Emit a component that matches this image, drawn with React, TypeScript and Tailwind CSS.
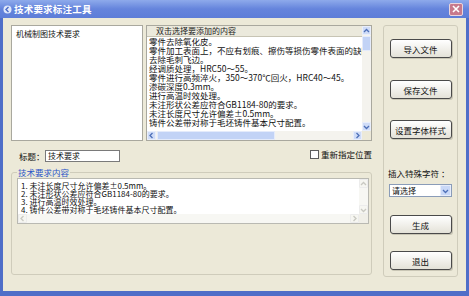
import React from "react";

const topLines = [
  "零件去除氧化皮。",
  "零件加工表面上，不应有划痕、擦伤等损伤零件表面的缺陷",
  "去除毛刺飞边。",
  "经调质处理，HRC50～55。",
  "零件进行高频淬火，350～370℃回火，HRC40～45。",
  "渗碳深度0.3mm。",
  "进行高温时效处理。",
  "未注形状公差应符合GB1184-80的要求。",
  "未注长度尺寸允许偏差±0.5mm。",
  "铸件公差带对称于毛坯铸件基本尺寸配置。",
];

const bottomLines = [
  "1. 未注长度尺寸允许偏差±0.5mm。",
  "2. 未注形状公差应符合GB1184-80的要求。",
  "3. 进行高温时效处理。",
  "4. 铸件公差带对称于毛坯铸件基本尺寸配置。",
];

function Chevron({ dir, color }: { dir: "up" | "down" | "left" | "right"; color: string }) {
  const pts: Record<string, string> = {
    up: "1,4 3.5,1.5 6,4",
    down: "1,2 3.5,4.5 6,2",
    left: "4.5,1 2,3.5 4.5,6",
    right: "2.5,1 5,3.5 2.5,6",
  };
  const vert = dir === "up" || dir === "down";
  return (
    <svg width={7} height={vert ? 6 : 7} viewBox={vert ? "0 0 7 6" : "0 0 7 7"}>
      <polyline points={pts[dir]} fill="none" stroke={color} strokeWidth="1.3" />
    </svg>
  );
}

function ArrowBtn({ dir, active }: { dir: "up" | "down" | "left" | "right"; active: boolean }) {
  return (
    <div
      className={
        active
          ? "w-[9px] h-[9px] shrink-0 flex items-center justify-center rounded-[1px] bg-[#cfdcf7] border border-[#e8eefc]"
          : "w-[9px] h-[9px] shrink-0 flex items-center justify-center rounded-[1px] bg-[#f6f6f1] border border-[#ececec]"
      }
    >
      <Chevron dir={dir} color={active ? "#4d6fb8" : "#c9c9c2"} />
    </div>
  );
}

function Button({ label }: { label: string }) {
  return (
    <div className="w-[62px] h-[19px] shrink-0 rounded-[3px] border border-[#4a4a4a] bg-linear-to-b from-[#ffffff] to-[#e4e2d8] shadow-[1px_1px_0_#c9c6b5] flex items-center justify-center text-[8.5px] leading-[10px] text-[#111]">
      {label}
    </div>
  );
}

export default function App() {
  return (
    <div className="w-[469px] h-[296px] overflow-hidden bg-[#4f6ec8] flex flex-col font-['Noto_Sans_CJK_SC','Noto_Sans',sans-serif]">
      {/* Title bar */}
      <div className="h-[18px] shrink-0 bg-linear-to-b from-[#8eaaeb] via-[#6584dc] to-[#5d7dd8] flex items-center pl-[3px] pr-[6px]">
        <svg width="9" height="9" viewBox="0 0 9 9" className="shrink-0">
          <circle cx="4.5" cy="4.5" r="4" fill="#dfe7fa" />
          <polyline points="5.5,2 3,4.5 5.5,7" fill="none" stroke="#4a6ac8" strokeWidth="1.4" />
        </svg>
        <span className="ml-[2px] text-[9.5px] leading-[12px] font-bold text-white tracking-[0.2px]">技术要求标注工具</span>
        <div className="ml-auto w-[14px] h-[13px] rounded-[2px] bg-[#c7798c] border border-[#ead5dc] flex items-center justify-center">
          <svg width="8" height="8" viewBox="0 0 8 8">
            <path d="M1 1 L7 7 M7 1 L1 7" stroke="#fff" strokeWidth="1.6" />
          </svg>
        </div>
      </div>

      {/* Body */}
      <div className="flex-1 mx-[3px] mb-[5px] bg-[#ece9d8] flex pt-[7px] pl-[8px]">
        {/* Left column */}
        <div className="w-[361px] shrink-0 flex flex-col">
          {/* top row */}
          <div className="h-[116px] flex gap-[3px]">
            <div className="w-[133px] h-full bg-white border border-[#a9a89e] pl-[4px] pt-[3px] text-[8px] leading-[10px] text-[#111]">
              机械制图技术要求
            </div>
            <div className="w-[226px] h-full bg-white border border-[#a9a89e] flex flex-col">
              <div className="flex flex-1 min-h-0">
                <div className="flex-1 min-w-0 overflow-hidden">
                  <div className="h-[11px] bg-[#ebe9dc] border-b border-[#c7c4b4] pl-[9px] text-[8px] leading-[10px] text-[#222] whitespace-nowrap">
                    双击选择要添加的内容
                  </div>
                  <div className="pl-[2px]">
                    {topLines.map((l) => (
                      <div key={l} className="h-[9px] text-[8.5px] leading-[9px] text-[#111] whitespace-nowrap">
                        {l}
                      </div>
                    ))}
                  </div>
                </div>
                <div className="w-[9px] shrink-0 bg-[#f4f3ee] flex flex-col">
                  <ArrowBtn dir="up" active />
                  <div className="h-[15px] mt-[1px] rounded-[1px] bg-[#c2d3f6] border border-[#e4ebfb]" />
                  <div className="flex-1" />
                  <ArrowBtn dir="down" active />
                </div>
              </div>
              <div className="h-[9px] flex shrink-0">
                <div className="flex-1 flex bg-[#f4f3ee]">
                  <ArrowBtn dir="left" active />
                  <div className="w-[118px] ml-[1px] rounded-[1px] bg-[#c2d3f6] border border-[#e4ebfb]" />
                  <div className="flex-1" />
                  <ArrowBtn dir="right" active />
                </div>
                <div className="w-[9px] bg-[#ece9d8]" />
              </div>
            </div>
          </div>

          {/* title row */}
          <div className="mt-[9px] h-[12px] flex items-center">
            <span className="pl-[8px] w-[34px] text-[8.5px] leading-[10px] text-[#111]">标题：</span>
            <div className="w-[75px] h-[12px] bg-white border border-[#7a7a7a] pl-[2px] text-[8px] leading-[10px] text-[#111]">
              技术要求
            </div>
            <div className="ml-auto -mt-[4px] flex items-center gap-[2px]">
              <div className="w-[9px] h-[9px] bg-white border border-[#5d5d5d]" />
              <span className="text-[8.5px] leading-[10px] text-[#111]">重新指定位置</span>
            </div>
          </div>

          {/* group box */}
          <fieldset className="mt-[5px] h-[108px] border border-[#cfccbb] rounded-[3px] pl-[5px] pr-[2px] pb-[4px] flex flex-col">
            <legend className="px-[1px] text-[8.5px] leading-[10px] text-[#2a55c8]">技术要求内容</legend>
            <div className="mt-[1px] flex-1 bg-white border border-[#b9b9b2] flex flex-col">
              <div className="flex flex-1 min-h-0">
                <div className="flex-1 pl-[3px] pt-[3px]">
                  {bottomLines.map((l) => (
                    <div key={l} className="h-[8px] text-[8px] leading-[8px] text-[#111] whitespace-nowrap">
                      {l}
                    </div>
                  ))}
                </div>
                <div className="w-[9px] shrink-0 bg-[#f7f7f3] flex flex-col">
                  <ArrowBtn dir="up" active={false} />
                  <div className="flex-1" />
                  <ArrowBtn dir="down" active={false} />
                </div>
              </div>
              <div className="h-[9px] flex shrink-0">
                <div className="flex-1 flex bg-[#f7f7f3]">
                  <ArrowBtn dir="left" active={false} />
                  <div className="flex-1" />
                  <ArrowBtn dir="right" active={false} />
                </div>
                <div className="w-[9px] bg-[#f0efe8]" />
              </div>
            </div>
          </fieldset>
        </div>

        {/* Right panel */}
        <div className="ml-[11px] w-[75px] h-[252px] border border-[#cfccbb] rounded-[3px] flex flex-col items-center">
          <div className="mt-[13px]">
            <Button label="导入文件" />
          </div>
          <div className="mt-[22px]">
            <Button label="保存文件" />
          </div>
          <div className="mt-[21px]">
            <Button label="设置字体样式" />
          </div>
          <div className="mt-[29px] self-start pl-[4px] text-[8.5px] leading-[10px] text-[#111] whitespace-nowrap">
            插入特殊字符 ：
          </div>
          <div className="mt-[6px] w-[63px] h-[13px] bg-white border border-[#8a9cb8] flex items-center">
            <span className="flex-1 pl-[2px] text-[8px] leading-[10px] text-[#111]">请选择</span>
            <div className="w-[11px] h-[11px] rounded-[1px] bg-[#c9d8f7] border border-[#e6ecfb] flex items-center justify-center">
              <Chevron dir="down" color="#4d6fb8" />
            </div>
          </div>
          <div className="mt-[18px]">
            <Button label="生成" />
          </div>
          <div className="mt-[17px]">
            <Button label="退出" />
          </div>
        </div>
      </div>
    </div>
  );
}
